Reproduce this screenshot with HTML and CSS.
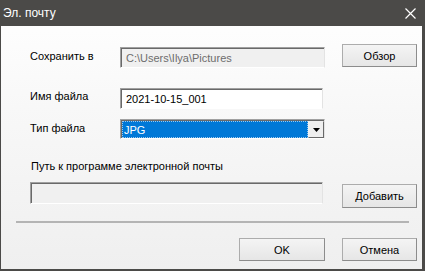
FILE: index.html
```html
<!DOCTYPE html>
<html lang="ru">
<head>
    <meta charset="UTF-8">
    <meta name="viewport" content="width=device-width, initial-scale=1.0">
    <title>Эл. почту</title>
    <link rel="stylesheet" href="styles.css">
</head>
<body>
    <div class="window">
        <div class="titlebar">
            <span class="title">Эл. почту</span>
            <svg class="close" width="11" height="11" viewBox="0 0 11 11">
                <path d="M0.5 0.5 L10.5 10.5 M10.5 0.5 L0.5 10.5" stroke="#fff" stroke-width="1.2" fill="none"/>
            </svg>
        </div>

        <div class="content">
            <div class="row row-save">
                <label class="label">Сохранить в</label>
                <div class="field field-disabled field-save">C:\Users\Ilya\Pictures</div>
                <button class="btn btn-browse">Обзор</button>
            </div>

            <div class="row row-name">
                <label class="label">Имя файла</label>
                <div class="field field-name">2021-10-15_001</div>
            </div>

            <div class="row row-type">
                <label class="label">Тип файла</label>
                <div class="select">
                    <span class="select-value">JPG</span>
                    <span class="select-arrow">
                        <svg width="7" height="4" viewBox="0 0 7 4"><path d="M0 0 H7 L3.5 4 Z" fill="#000"/></svg>
                    </span>
                </div>
            </div>

            <div class="mail-label">Путь к программе электронной почты</div>

            <div class="row row-mail">
                <div class="field field-disabled field-mail"></div>
                <button class="btn btn-add">Добавить</button>
            </div>
        </div>

        <div class="separator"></div>

        <div class="actions">
            <button class="btn btn-ok">OK</button>
            <button class="btn btn-cancel">Отмена</button>
        </div>
    </div>
</body>
</html>
```

FILE: styles.css
```css
body {
    margin: 0;
    font-family: "Liberation Sans", Arial, sans-serif;
    font-size: 11px;
    color: #000;
}

.window {
    width: 425px;
    height: 271px;
    box-sizing: border-box;
    border-left: 1px solid #4b4a48;
    border-right: 3px solid #4b4a48;
    border-bottom: 2px solid #4b4a48;
    background: linear-gradient(#ffffff, #f8f8f8 40%, #efefef);
    display: flex;
    flex-direction: column;
}

.titlebar {
    height: 26px;
    background: #4b4a48;
    display: flex;
    align-items: center;
    justify-content: space-between;
    padding: 0 9px 0 3px;
    margin-left: -1px;
    margin-right: -3px;
}

.title {
    color: #fff;
    font-size: 12px;
}

.close {
    display: block;
}

.content {
    padding: 18px 0 0 29px;
}

.row {
    display: flex;
}

.label {
    width: 90px;
}

.field {
    box-sizing: border-box;
    border-top: 1px solid #a0a0a0;
    border-left: 1px solid #a0a0a0;
    border-right: 1px solid #e3e3e3;
    border-bottom: 1px solid #ffffff;
    box-shadow: inset 1px 1px 0 #696969;
    background: #fff;
    padding: 4px 0 0 5px;
    white-space: nowrap;
    overflow: hidden;
}

.field-disabled {
    background: #f0f0f0;
    color: #6d6d6d;
}

.btn {
    box-sizing: border-box;
    border: 1px solid #acacac;
    border-right-color: #8c8c8c;
    border-bottom-color: #8c8c8c;
    background: linear-gradient(#f4f4f4, #e6e6e6);
    font-family: inherit;
    font-size: 11px;
    color: #000;
    height: 23px;
    width: 75px;
    padding: 0;
}

.row-save {
    height: 24px;
}

.row-save .label {
    padding-top: 6px;
}

.field-save {
    width: 205px;
    height: 21px;
    margin-top: 3px;
}

.btn-browse {
    margin-left: 17px;
}

.row-name {
    margin-top: 20px;
    height: 21px;
}

.row-name .label {
    padding-top: 2px;
}

.field-name {
    width: 203px;
    height: 21px;
}

.row-type {
    margin-top: 10px;
    height: 20px;
}

.row-type .label {
    padding-top: 3px;
}

.select {
    box-sizing: border-box;
    width: 205px;
    height: 20px;
    border-top: 1px solid #a0a0a0;
    border-left: 1px solid #a0a0a0;
    border-right: 1px solid #e3e3e3;
    border-bottom: 1px solid #ffffff;
    box-shadow: inset 1px 1px 0 #696969;
    display: flex;
    padding: 1px 0 0 1px;
}

.select-value {
    flex: 1;
    background: #0078d7;
    color: #fff;
    padding: 3px 0 0 2px;
    outline: 1px dotted #9cc8ee;
    outline-offset: -1px;
}

.select-arrow {
    width: 16px;
    box-sizing: border-box;
    border: 1px solid #f0f0f0;
    border-right-color: #696969;
    border-bottom-color: #696969;
    background: #efefef;
    display: flex;
    align-items: center;
    justify-content: center;
}

.select-arrow svg {
    display: block;
}

.mail-label {
    margin-top: 21px;
    padding-left: 1px;
}

.row-mail {
    margin-top: 10px;
    height: 26px;
}

.field-mail {
    width: 293px;
    height: 22px;
}

.btn-add {
    margin-left: 19px;
    margin-top: 2px;
    height: 24px;
}

.separator {
    height: 2px;
    background: #b4b4b4;
    margin: 13px 13px 0 15px;
}

.actions {
    display: flex;
    padding-left: 238px;
    margin-top: 15px;
}

.btn-ok {
    width: 86px;
}

.btn-cancel {
    margin-left: 17px;
}
```
